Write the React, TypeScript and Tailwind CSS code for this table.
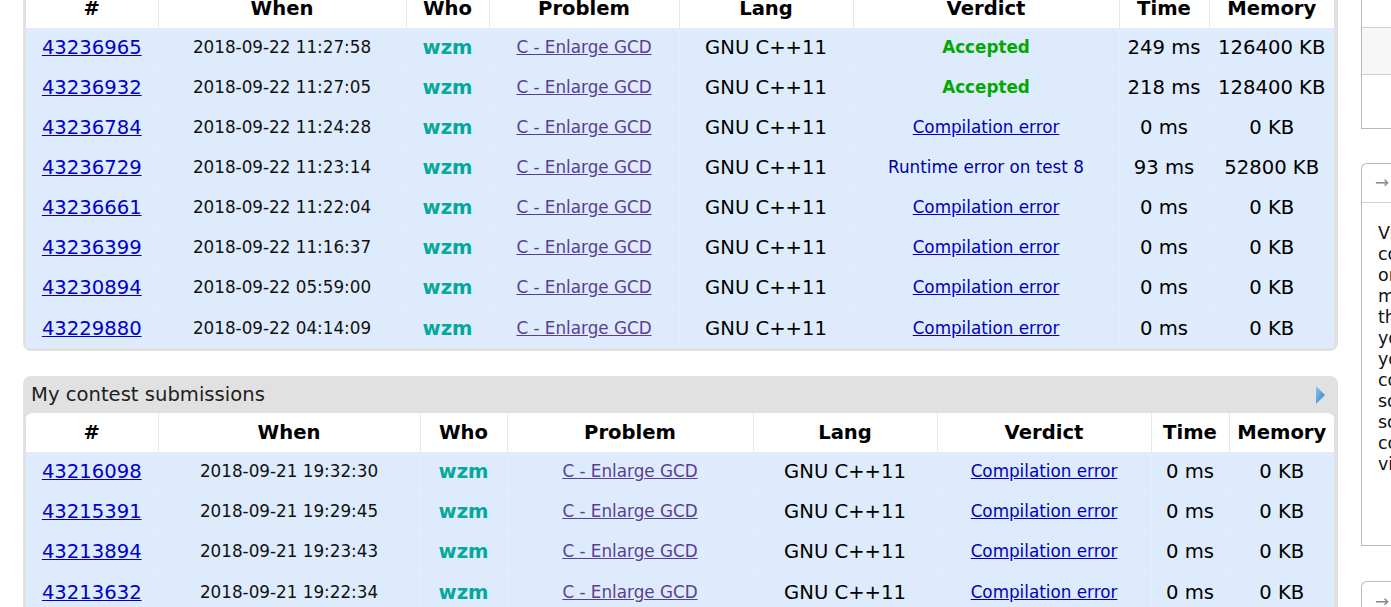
import React, { FC } from 'react';

type Verdict = 'ok' | 'ce' | 're';

interface Row {
	id: string;
	when: string;
	verdict: Verdict;
	verdictText: string;
	time: string;
	memory: string;
}

const recent: Row[] = [
	{ id: '43236965', when: '2018-09-22 11:27:58', verdict: 'ok', verdictText: 'Accepted', time: '249 ms', memory: '126400 KB' },
	{ id: '43236932', when: '2018-09-22 11:27:05', verdict: 'ok', verdictText: 'Accepted', time: '218 ms', memory: '128400 KB' },
	{ id: '43236784', when: '2018-09-22 11:24:28', verdict: 'ce', verdictText: 'Compilation error', time: '0 ms', memory: '0 KB' },
	{ id: '43236729', when: '2018-09-22 11:23:14', verdict: 're', verdictText: 'Runtime error on test 8', time: '93 ms', memory: '52800 KB' },
	{ id: '43236661', when: '2018-09-22 11:22:04', verdict: 'ce', verdictText: 'Compilation error', time: '0 ms', memory: '0 KB' },
	{ id: '43236399', when: '2018-09-22 11:16:37', verdict: 'ce', verdictText: 'Compilation error', time: '0 ms', memory: '0 KB' },
	{ id: '43230894', when: '2018-09-22 05:59:00', verdict: 'ce', verdictText: 'Compilation error', time: '0 ms', memory: '0 KB' },
	{ id: '43229880', when: '2018-09-22 04:14:09', verdict: 'ce', verdictText: 'Compilation error', time: '0 ms', memory: '0 KB' },
];

const contest: Row[] = [
	{ id: '43216098', when: '2018-09-21 19:32:30', verdict: 'ce', verdictText: 'Compilation error', time: '0 ms', memory: '0 KB' },
	{ id: '43215391', when: '2018-09-21 19:29:45', verdict: 'ce', verdictText: 'Compilation error', time: '0 ms', memory: '0 KB' },
	{ id: '43213894', when: '2018-09-21 19:23:43', verdict: 'ce', verdictText: 'Compilation error', time: '0 ms', memory: '0 KB' },
	{ id: '43213632', when: '2018-09-21 19:22:34', verdict: 'ce', verdictText: 'Compilation error', time: '0 ms', memory: '0 KB' },
];

const headers = ['#', 'When', 'Who', 'Problem', 'Lang', 'Verdict', 'Time', 'Memory'];

const VerdictCell: FC<{ row: Row }> = ({ row }) => {
	if (row.verdict === 'ok') return <span className="font-bold text-[#00a900]">{row.verdictText}</span>;
	if (row.verdict === 're') return <span className="text-[#0000a0]">{row.verdictText}</span>;
	return <a className="text-[#0000c0] underline">{row.verdictText}</a>;
};

const StatusTable: FC<{ rows: Row[]; widths: number[]; roundedTop?: boolean }> = ({ rows, widths, roundedTop }) => (
	<table className="table-fixed border-collapse w-[1308px]">
		<colgroup>
			{widths.map((w, i) => (
				<col key={i} style={{ width: w }} />
			))}
		</colgroup>
		<thead>
			<tr className="h-[39px] bg-white">
				{headers.map((h, i) => (
					<th
						key={h}
						className={`font-bold text-[19.6px] text-black text-center p-0 ${i > 0 ? 'border-l border-[#e8e8e8]' : ''} ${roundedTop && i === 0 ? 'rounded-tl-[6px]' : ''} ${roundedTop && i === 7 ? 'rounded-tr-[6px]' : ''}`}
					>
						{h}
					</th>
				))}
			</tr>
		</thead>
		<tbody>
			{rows.map((r) => (
				<tr key={r.id} className="h-[40px] bg-[#ddebfc] border-t border-[#e6eefa]">
					<td className="text-center text-[19.6px]">
						<a className="text-[#0000cc] underline">{r.id}</a>
					</td>
					<td className="text-center text-[16.8px] text-[#111] border-l border-[#e6eefa]">{r.when}</td>
					<td className="text-center text-[19.6px] font-bold text-[#03a89e] border-l border-[#e6eefa]">wzm</td>
					<td className="text-center text-[16.8px] border-l border-[#e6eefa]">
						<a className="text-[#5a3f91] underline">C - Enlarge GCD</a>
					</td>
					<td className="text-center text-[19.6px] text-black border-l border-[#e6eefa]">GNU C++11</td>
					<td className="text-center text-[16.8px] border-l border-[#e6eefa]">
						<VerdictCell row={r} />
					</td>
					<td className="text-center text-[19.6px] text-black border-l border-[#e6eefa]">{r.time}</td>
					<td className="text-center text-[19.6px] text-black border-l border-[#e6eefa]">{r.memory}</td>
				</tr>
			))}
		</tbody>
	</table>
);

const sideLines = [
	'Virtual contest is a way to take part in past',
	'contest, as close as possible to participation',
	'on time. It is supported only ICPC',
	'mode for virtual contests. If you\'ve seen',
	'these problems, a virtual contest is not for',
	'you - solve these problems in the archive. If',
	'you just want to solve some problem from a',
	'contest, a virtual contest is not for you -',
	'solve this problem in the archive. Never use',
	'someone else\'s code, read the tutorials or',
	'communicate with other person during a',
	'virtual contest.',
];

export default function App() {
	return (
		<div
			className="w-[1391px] h-[607px] overflow-hidden bg-white flex items-start"
			style={{ fontFamily: '"DejaVu Sans", Verdana, sans-serif' }}
		>
			<div className="w-[1338px] shrink-0 pl-[23px] flex flex-col">
				<div className="-mt-[11px] bg-[#e1e1e1] pl-[3px] pr-[4px] pb-[3px] rounded-b-[8px]">
					<StatusTable
						rows={recent}
						widths={[132, 248, 83, 190, 174, 266, 90, 125]}
					/>
				</div>

				<div className="mt-[25px] bg-[#e1e1e1] pl-[3px] pr-[4px] rounded-t-[8px]">
					<div className="h-[37px] flex items-center justify-between pl-[5px] pr-[9px]">
						<span className="text-[19.6px] text-[#222]">My contest submissions</span>
						<svg width="9" height="18" viewBox="0 0 9 18">
							<defs>
								<linearGradient id="tri" x1="0" y1="0" x2="1" y2="1">
									<stop offset="0" stopColor="#8cc4f0" />
									<stop offset="1" stopColor="#2a7fd0" />
								</linearGradient>
							</defs>
							<path d="M0 0 L9 9 L0 18 Z" fill="url(#tri)" />
						</svg>
					</div>
					<StatusTable
						rows={contest}
						widths={[132, 262, 87, 246, 184, 214, 78, 105]}
						roundedTop
					/>
				</div>
			</div>

			<div className="ml-[23px] w-[320px] shrink-0 flex flex-col">
				<div className="h-[129px] shrink-0 border-l border-b border-[#b9b9b9] flex flex-col">
					<div className="h-[28px] border-b border-[#d0d0d0] bg-white" />
					<div className="h-[47px] border-b border-[#d0d0d0] bg-[#f7f7f7]" />
					<div className="flex-1 bg-white" />
				</div>

				<div className="mt-[34px] h-[383px] shrink-0 border-l border-t border-b border-[#b9b9b9] rounded-tl-[6px] flex flex-col">
					<div className="h-[39px] border-b border-[#d0d0d0] flex items-center pl-[13px] text-[16.8px] text-[#888]">
						→ Virtual participation
					</div>
					<div className="pt-[20px] pl-[16px] text-[17.5px] leading-[21px] text-[#111]">
						{sideLines.map((l) => (
							<div key={l} className="whitespace-nowrap">{l}</div>
						))}
					</div>
				</div>

				<div className="mt-[35px] h-[60px] shrink-0 border-l border-t border-[#b9b9b9] rounded-tl-[6px]">
					<div className="h-[39px] flex items-center pl-[13px] text-[16.8px] text-[#888]">→ Problems</div>
				</div>
			</div>
		</div>
	);
}
